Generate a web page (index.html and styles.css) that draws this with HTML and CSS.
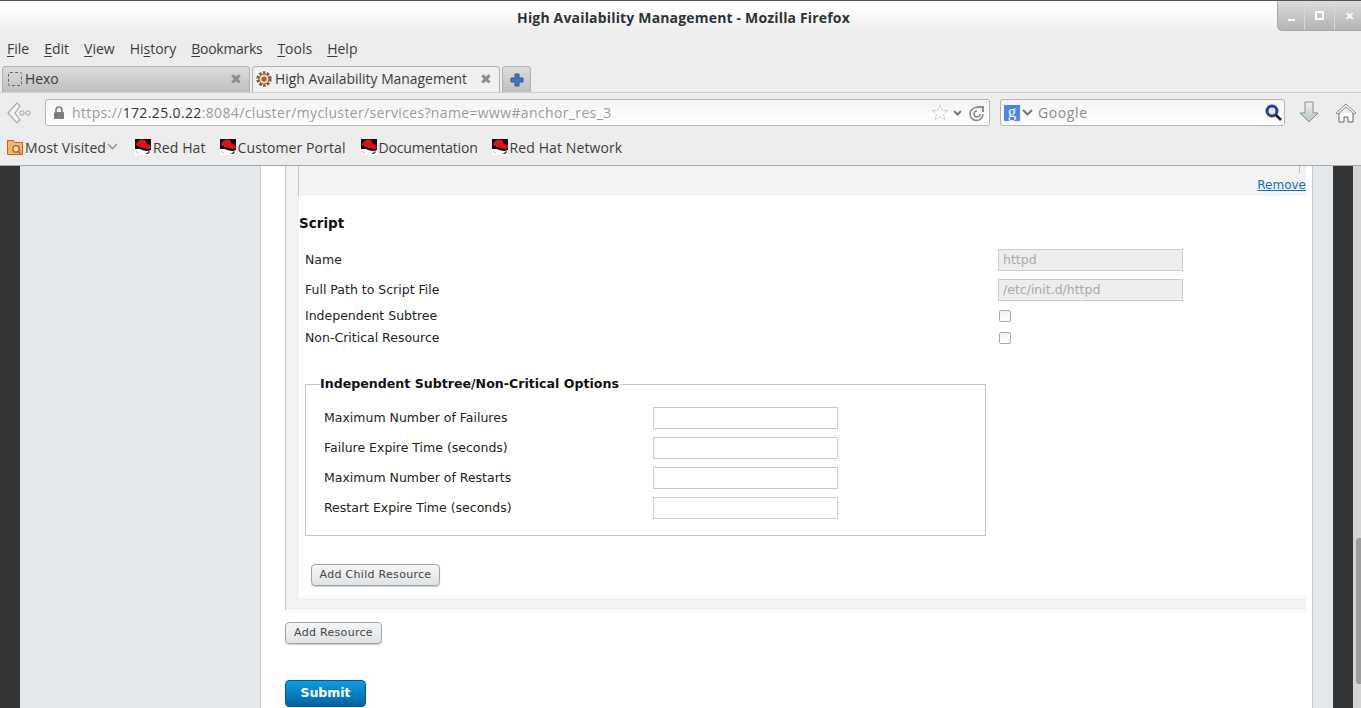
FILE: index.html
```html
<!DOCTYPE html>
<html lang="en">
<head>
    <meta charset="UTF-8">
    <title>High Availability Management</title>
    <link rel="stylesheet" href="styles.css">
</head>
<body>
    <svg class="defs" width="0" height="0">
        <symbol id="redhat" viewBox="0 0 16 16">
            <rect width="16" height="16" fill="#fff"/>
            <rect width="16" height="10" fill="#111"/>
            <path d="M5 1c2-1 3 0 5 0 1 1 1 3 2 4 2 0 3 1 4 3 0 2-1 2-3 2C9 10 4 8 1 6c0-2 2-4 4-5z" fill="#dc1218"/>
            <path d="M1 6c3 2 8 4 12 4 1 0 2 0 3-1v2l-3 1c-4 0-9-2-12-4z" fill="#111"/>
            <path d="M10 15l2-1 2-2 1 1-2 2z" fill="#333"/>
            <path d="M0 11l3 2 1 2-2-1z" fill="#bbb"/>
        </symbol>
    </svg>

    <div class="chrome">
        <div class="titlebar">
            <span class="title">High Availability Management - Mozilla Firefox</span>
            <div class="winctl">
                <span class="winbtn"><i class="min"></i></span>
                <span class="winbtn"><i class="max"></i></span>
                <span class="winbtn close">&#10005;</span>
            </div>
        </div>

        <div class="menubar">
            <span><u>F</u>ile</span>
            <span><u>E</u>dit</span>
            <span><u>V</u>iew</span>
            <span>Hi<u>s</u>tory</span>
            <span class="menu-long"><u>B</u>ookmarks</span>
            <span><u>T</u>ools</span>
            <span><u>H</u>elp</span>
        </div>

        <div class="tabbar">
            <div class="tab">
                <span class="blank-icon"></span>
                <span class="tab-label">Hexo</span>
                <span class="tab-x">&#10006;</span>
            </div>
            <div class="tab active">
                <svg class="favicon" width="16" height="16" viewBox="0 0 16 16">
                    <rect width="16" height="16" fill="#fff"/>
                    <circle cx="8" cy="8" r="6.200" fill="none" stroke="#7d5a34" stroke-width="3" stroke-dasharray="2.600 1.300"/>
                    <circle cx="8" cy="8" r="5" fill="#efe2d0" stroke="#8a6236"/>
                    <circle cx="8" cy="8" r="2.600" fill="#c4561e"/>
                </svg>
                <span class="tab-label">High Availability Management</span>
                <span class="tab-x">&#10006;</span>
            </div>
            <div class="tab newtab">
                <svg width="14" height="14" viewBox="0 0 14 14">
                    <path d="M5 1h4v4h4v4H9v4H5V9H1V5h4z" fill="#3f77b8" stroke="#2c5a94"/>
                </svg>
            </div>
        </div>

        <div class="navbar">
            <svg class="back" width="24" height="24" viewBox="0 0 24 24">
                <path d="M10 2L1 12l9 10 3-3-5-7 5-7z" fill="#f6f6f6" stroke="#a9a9a9" stroke-width="1.200"/>
                <circle cx="15" cy="12" r="2.200" fill="none" stroke="#a0a0a0"/>
                <circle cx="21" cy="12" r="2.200" fill="none" stroke="#a0a0a0"/>
            </svg>
            <div class="urlbar">
                <svg class="lock" width="12" height="14" viewBox="0 0 12 14">
                    <path d="M3 6V4a3 3 0 0 1 6 0v2" fill="none" stroke="#7c7c7c" stroke-width="1.600"/>
                    <rect x="1" y="6" width="10" height="7" rx="1" fill="#7c7c7c"/>
                </svg>
                <span class="url">https://<b>172.25.0.22</b>:8084/cluster/mycluster/services?name=www#anchor_res_3</span>
                <svg class="url-tools" width="56" height="18" viewBox="0 0 56 18">
                    <path d="M10 1l2.200 5 5.300.5-4 3.600 1.200 5.400L10 12.700l-4.700 2.800 1.200-5.400-4-3.600L7.800 6z" fill="#fff" stroke="#d2d2d2"/>
                    <path d="M24 7l3.500 3.500L31 7" fill="none" stroke="#777" stroke-width="2"/>
                    <path d="M47 3.500a6.500 6.500 0 1 0 6 6.500M47 7a3 3 0 1 0 3 3" fill="none" stroke="#8a8a8a" stroke-width="1.600"/>
                    <path d="M47 2h7v6h-2V4h-5z" fill="#8a8a8a"/>
                </svg>
            </div>
            <div class="searchbar">
                <span class="engine">g</span>
                <svg width="11" height="8" viewBox="0 0 11 8"><path d="M1 1l4.500 4.500L10 1" fill="none" stroke="#777" stroke-width="2"/></svg>
                <span class="search-text">Google</span>
                <svg class="mag" width="17" height="17" viewBox="0 0 17 17">
                    <circle cx="7" cy="7" r="5" fill="#dfe6f2" stroke="#2b3f8f" stroke-width="3"/>
                    <path d="M11 11l5 5" stroke="#222" stroke-width="2.600"/>
                </svg>
            </div>
            <svg class="down" width="20" height="24" viewBox="0 0 20 24">
                <defs>
                    <linearGradient id="downfill" x1="0" y1="0" x2="0" y2="1">
                        <stop offset="0" stop-color="#eef1f2"/>
                        <stop offset="1" stop-color="#b8c2c5"/>
                    </linearGradient>
                </defs>
                <path d="M6 1h8v11h5L10 21 1 12h5z" fill="url(#downfill)" stroke="#858d90"/>
            </svg>
            <svg class="home" width="22" height="22" viewBox="0 0 22 22">
                <path d="M1 11L11 2l10 9-2 1-8-7-8 7z" fill="#f4f4f4" stroke="#8a8a8a"/>
                <path d="M4 11v9h5v-5h4v5h5v-9" fill="#fafafa" stroke="#666"/>
            </svg>
        </div>

        <div class="bookmarks">
            <span class="bm">
                <svg width="16" height="16" viewBox="0 0 16 16">
                    <path d="M.5 1.500h6l1 2h8v12H.5z" fill="#efb573" stroke="#c8651e"/>
                    <circle cx="9" cy="10" r="3.200" fill="#fbe9d4" stroke="#c8651e" stroke-width="1.500"/>
                    <path d="M11 12l3 3" stroke="#c8651e" stroke-width="1.500"/>
                </svg>
                Most Visited
                <svg class="bm-arrow" width="11" height="8" viewBox="0 0 11 8"><path d="M1 1l4.500 4.500L10 1" fill="none" stroke="#999" stroke-width="1.600"/></svg>
            </span>
            <span class="bm"><svg width="16" height="16"><use href="#redhat"/></svg>Red Hat</span>
            <span class="bm"><svg width="16" height="16"><use href="#redhat"/></svg>Customer Portal</span>
            <span class="bm bm-doc"><svg width="16" height="16"><use href="#redhat"/></svg>Documentation</span>
            <span class="bm"><svg width="16" height="16"><use href="#redhat"/></svg>Red Hat Network</span>
        </div>
    </div>

    <div class="viewport">
        <div class="edge"></div>
        <div class="sidebar"></div>

        <div class="main">
            <div class="panel">
                <div class="panel-top">
                    <span class="tick"></span>
                    <a href="#" class="remove">Remove</a>
                </div>

                <div class="resource">
                    <h3>Script</h3>

                    <div class="row text-row">
                        <label>Name</label>
                        <input type="text" value="httpd" disabled>
                    </div>
                    <div class="row text-row">
                        <label>Full Path to Script File</label>
                        <input type="text" value="/etc/init.d/httpd" disabled>
                    </div>
                    <div class="row check-row first-check">
                        <label>Independent Subtree</label>
                        <span class="check"></span>
                    </div>
                    <div class="row check-row">
                        <label>Non-Critical Resource</label>
                        <span class="check"></span>
                    </div>

                    <fieldset>
                        <legend>Independent Subtree/Non-Critical Options</legend>
                        <div class="opt-row">
                            <label>Maximum Number of Failures</label>
                            <input type="text">
                        </div>
                        <div class="opt-row">
                            <label>Failure Expire Time (seconds)</label>
                            <input type="text">
                        </div>
                        <div class="opt-row">
                            <label>Maximum Number of Restarts</label>
                            <input type="text">
                        </div>
                        <div class="opt-row">
                            <label>Restart Expire Time (seconds)</label>
                            <input type="text">
                        </div>
                    </fieldset>

                    <button type="button" class="btn add-child">Add Child Resource</button>
                </div>
            </div>

            <button type="button" class="btn add-res">Add Resource</button>
            <button type="button" class="submit">Submit</button>
        </div>

        <div class="sidebar right"></div>
        <div class="edge"></div>
        <div class="scrollbar"><div class="thumb"></div></div>
    </div>
</body>
</html>
```

FILE: styles.css
```css
html, body {
    margin: 0;
    height: 708px;
    overflow: hidden;
}

body {
    font-family: "DejaVu Sans", sans-serif;
    font-size: 12.5px;
    color: #222;
    background-color: #fff;
}

.defs {
    display: block;
    height: 0;
}

/* browser window */
.chrome {
    height: 166px;
    box-sizing: border-box;
    background-color: #ededed;
    border-bottom: 1px solid #a8a8a8;
    font-family: "Open Sans", sans-serif;
    font-size: 14px;
    color: #3c3c3c;
}

.titlebar {
    position: relative;
    height: 38px;
    box-sizing: border-box;
    border-top: 1px solid #555;
    padding: 7px 0 0 6px;
    text-align: center;
    background: linear-gradient(#fff 0, #fff 8px, #ededed 32px);
}

.title {
    font-weight: 700;
    font-size: 14px;
    color: #2e3436;
    letter-spacing: 0.17px;
}

.winctl {
    position: absolute;
    top: 0;
    right: 0;
    display: flex;
    height: 29px;
    border-bottom-left-radius: 5px;
    background: linear-gradient(#dcdcdc, #b4b4b4);
    border-left: 1px solid #aaa;
    border-bottom: 1px solid #a8a8a8;
}

.winbtn {
    width: 27px;
    box-sizing: border-box;
    display: flex;
    justify-content: center;
    align-items: center;
    border-right: 1px solid #d8d8d8;
    color: #fff;
    font-size: 11px;
    font-weight: 700;
}

.winbtn + .winbtn {
    width: 30px;
}

.winbtn.close {
    width: 26px;
    border-right: none;
    justify-content: flex-start;
    padding-left: 10px;
}

.min {
    width: 7px;
    height: 2px;
    margin-top: 8px;
    background-color: #fff;
}

.max {
    width: 5px;
    height: 5px;
    border: 2px solid #fff;
}

.menubar {
    display: flex;
    gap: 15px;
    height: 27px;
    padding-left: 7px;
    line-height: 22px;
}

.menubar u {
    text-underline-offset: 2px;
}

.menu-long {
    letter-spacing: -0.3px;
}

.tabbar {
    display: flex;
    align-items: flex-end;
    gap: 2px;
    height: 27px;
    padding-left: 2px;
    border-bottom: 1px solid #d2d2d2;
}

.tab {
    display: flex;
    align-items: center;
    width: 248px;
    height: 26px;
    box-sizing: border-box;
    padding: 0 6px 2px 4px;
    border: 1px solid #b0b0b0;
    border-bottom: none;
    border-radius: 4px 4px 0 0;
    background: linear-gradient(#dcdcdc, #bfbfbf);
    font-size: 13.9px;
}

.tab.active {
    background: #f0f0f0;
    padding-left: 3px;
}

.tab.newtab {
    width: 29px;
    justify-content: center;
    padding: 0;
}

.tab-label {
    flex: 1;
    margin-left: 3px;
}

.tab-x {
    font-size: 14px;
    color: #8e8e8e;
    margin-right: 1px;
}

.blank-icon {
    width: 12px;
    height: 12px;
    border: 1px dashed #666;
    border-radius: 2px;
    margin-left: 1px;
}

.navbar {
    display: flex;
    align-items: center;
    height: 37px;
    padding: 2px 0 0 7px;
    box-sizing: border-box;
}

.back {
    margin-right: 14px;
}

.urlbar,
.searchbar {
    display: flex;
    align-items: center;
    height: 27px;
    box-sizing: border-box;
    border: 1px solid #b5b5b5;
    border-radius: 3px;
    background: linear-gradient(#f4f4f4, #fff);
}

.urlbar {
    width: 945px;
    padding-left: 7px;
    color: #9a9a9a;
}

.lock {
    margin-right: 7px;
}

.url {
    flex: 1;
    letter-spacing: 0.36px;
}

.url b {
    font-weight: 400;
    color: #333;
}

.url-tools {
    margin-right: 3px;
}

.searchbar {
    width: 285px;
    margin: 0 14px 0 10px;
    padding: 0 2px 0 3px;
    color: #8a8a8a;
}

.engine {
    width: 16px;
    height: 16px;
    margin-right: 2px;
    background-color: #4a86f0;
    color: #fff;
    font-family: "Liberation Serif", serif;
    font-size: 17px;
    line-height: 13px;
    text-align: center;
}

.search-text {
    flex: 1;
    margin-left: 5px;
    letter-spacing: 0.6px;
}

.home {
    margin-left: 16px;
}

.bookmarks {
    display: flex;
    align-items: center;
    gap: 14px;
    height: 37px;
    padding: 0 0 3px 7px;
    box-sizing: border-box;
}

.bm {
    display: flex;
    align-items: center;
    gap: 2px;
    letter-spacing: 0.1px;
}

.bm-doc {
    margin-left: 1px;
    letter-spacing: -0.2px;
}

.bm-arrow {
    margin-left: -1px;
    margin-right: 3px;
}

/* page */
.viewport {
    display: flex;
    height: 542px;
    overflow: hidden;
}

.edge {
    width: 20px;
    flex: none;
    background-color: #343537;
}

.sidebar {
    width: 240px;
    flex: none;
    background-color: #e6e9ec;
    border-right: 1px solid #c8c8c8;
}

.sidebar.right {
    width: 20px;
    border-left: 1px solid #c8c8c8;
    border-right: none;
}

.main {
    width: 1051px;
    flex: none;
    box-sizing: border-box;
    padding-left: 24px;
    background-color: #fff;
}

.panel {
    width: 1021px;
    box-sizing: border-box;
    padding: 0 0 12px 13px;
    border-left: 1px solid #c4c4c4;
    background-color: #f3f3f3;
}

.panel-top {
    position: relative;
    height: 30px;
    margin-left: -1px;
    border-left: 1px solid #c4c4c4;
    text-align: right;
}

.tick {
    position: absolute;
    top: 0;
    right: 6px;
    width: 1px;
    height: 7px;
    background-color: #bbb;
}

.remove {
    display: inline-block;
    padding-top: 12px;
    font-size: 12px;
    color: #0a70c0;
}

.resource {
    height: 402px;
    box-sizing: border-box;
    padding-top: 17px;
    background-color: #fff;
}

h3 {
    margin: 0 0 16px;
    height: 20px;
    font-size: 13.5px;
    line-height: 20px;
    font-weight: 700;
    color: #111;
}

.row {
    display: grid;
    grid-template-columns: 693px 185px;
    align-items: center;
    padding-left: 6px;
}

label {
    margin-bottom: 2px;
}

.text-row {
    height: 22px;
    margin-bottom: 8px;
}

.check-row {
    height: 22px;
}

.first-check {
    margin-top: -5px;
}

.check-row label {
    margin-bottom: 0;
}

input[type="text"] {
    width: 185px;
    height: 22px;
    box-sizing: border-box;
    padding: 0 4px 2px;
    border: 1px solid #c8ccd0;
    font-family: "DejaVu Sans", sans-serif;
    font-size: 12.5px;
    background-color: #fff;
}

input[type="text"]:disabled {
    background-color: #ededed;
    color: #aaa;
}

.check {
    width: 10px;
    height: 10px;
    margin: 2px 0 0 1px;
    border: 1px solid #a8ad9e;
    border-radius: 2px;
    background: linear-gradient(#f2f2f2, #fff);
}

fieldset {
    width: 681px;
    height: 160px;
    box-sizing: border-box;
    margin: 28px 0 28px 6px;
    padding: 14px 0 0 18px;
    border: 1px solid #c4c4c4;
}

legend {
    margin-left: -4px;
    padding: 0 2px 2px 0;
    font-weight: 700;
    font-size: 12.6px;
    color: #111;
}

.opt-row {
    display: grid;
    grid-template-columns: 329px 185px;
    align-items: center;
    height: 22px;
    margin-bottom: 8px;
}

.btn {
    display: block;
    height: 22px;
    box-sizing: border-box;
    padding: 0 0 2px;
    border: 1px solid #a2a4a6;
    border-radius: 4px;
    background: linear-gradient(#f6f6f6, #dfe3e6);
    box-shadow: 0 1px 1px rgba(0, 0, 0, 0.2);
    font-family: "DejaVu Sans", sans-serif;
    font-size: 11px;
    letter-spacing: 0.3px;
    color: #444;
}

.add-child {
    width: 129px;
    margin-left: 12px;
}

.add-res {
    width: 97px;
    margin-top: 12px;
}

.submit {
    display: block;
    width: 81px;
    height: 27px;
    margin-top: 36px;
    padding: 0 0 2px;
    border: 1px solid #04588f;
    border-radius: 4px;
    background: linear-gradient(#0c9ce0, #0264a4);
    font-family: "DejaVu Sans", sans-serif;
    font-weight: 700;
    font-size: 12.5px;
    color: #fff;
}

.scrollbar {
    flex: 1;
    background-color: #d4d4d4;
    padding: 372px 0 0 3px;
}

.thumb {
    height: 146px;
    background-color: #9c9c9c;
    border-radius: 3px 0 0 3px;
}
```
